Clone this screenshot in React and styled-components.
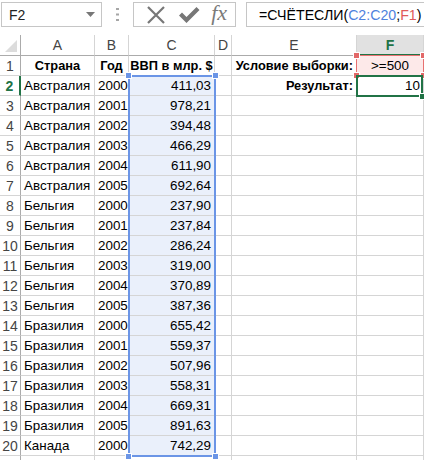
import React from "react";
import styled, { createGlobalStyle, css } from "styled-components";

const GlobalStyle = createGlobalStyle`
  html, body {
    margin: 0;
    padding: 0;
    background: #fff;
    overflow: hidden;
  }
  body {
    font-family: "Liberation Sans", Arial, sans-serif;
    font-size: 14px;
    color: #000;
  }
`;

const COLS = [21, 74, 34, 86, 17, 125];
const ROW_H = 20;
const HEAD_H = 21;

const Toolbar = styled.div`
  display: flex;
  align-items: stretch;
  height: 25px;
  padding: 2px 0 8px 1px;
`;

const NameBox = styled.div`
  width: 101px;
  box-sizing: border-box;
  border: 1px solid #c6c6c6;
  display: flex;
  align-items: center;
  justify-content: space-between;
  padding: 0 6px 0 7px;
  font-size: 14px;
  color: #222;
`;

const Grip = styled.div`
  width: 31px;
  display: flex;
  align-items: center;
  justify-content: center;
`;

const ButtonBox = styled.div`
  width: 103px;
  box-sizing: border-box;
  border: 1px solid #c6c6c6;
  display: flex;
  align-items: center;
  justify-content: space-around;
  padding: 0 2px 0 6px;
`;

const Fx = styled.span`
  font-family: "Liberation Serif", "Times New Roman", serif;
  font-style: italic;
  font-size: 22px;
  color: #7a7a7a;
  line-height: 1;
  margin-top: -3px;
`;

const FormulaBox = styled.div`
  flex: 1;
  margin-left: 10px;
  box-sizing: border-box;
  border: 1px solid #c6c6c6;
  border-right: none;
  display: flex;
  align-items: center;
  padding-left: 12px;
  font-size: 14.2px;
  white-space: nowrap;
`;

const Ref = styled.span`
  color: ${(p) => p.$color};
`;

const Sheet = styled.div`
  position: relative;
  display: grid;
  grid-template-columns: ${COLS.map((c) => c + "px").join(" ")} 1fr;
  grid-auto-rows: ${ROW_H}px;
  grid-template-rows: ${HEAD_H}px;
`;

const HeadCell = styled.div`
  box-sizing: border-box;
  display: flex;
  align-items: center;
  justify-content: center;
  background: #fff;
  color: #444;
  font-size: 14px;
  border-right: 1px solid #d5d5d5;
  border-bottom: 1px solid #ababab;
  ${(p) =>
    p.$active &&
    css`
      background: #e1e1e1;
      color: #217346;
      font-weight: bold;
      border-bottom: 2px solid #217346;
    `}
`;

const Corner = styled(HeadCell)`
  align-items: flex-end;
  justify-content: flex-end;
  padding: 0 3px 3px 0;
  border-right: 1px solid #ababab;
`;

const RowHead = styled.div`
  box-sizing: border-box;
  display: flex;
  align-items: center;
  justify-content: center;
  color: #444;
  font-size: 14px;
  border-right: 1px solid #ababab;
  border-bottom: 1px solid #d5d5d5;
  ${(p) =>
    p.$active &&
    css`
      color: #217346;
      font-weight: bold;
      border-right: 2px solid #217346;
    `}
`;

const Cell = styled.div`
  box-sizing: border-box;
  display: flex;
  align-items: center;
  justify-content: ${(p) =>
    p.$align === "right" ? "flex-end" : p.$align === "center" ? "center" : "flex-start"};
  padding: 0 3px 0 3px;
  white-space: nowrap;
  overflow: visible;
  font-size: ${(p) => (p.$bold ? "12.8px" : "13.4px")};
  font-weight: ${(p) => (p.$bold ? "bold" : "normal")};
  background: ${(p) => p.$fill || "#fff"};
  border-right: 1px solid #d5d5d5;
  border-bottom: 1px solid #d5d5d5;
`;

const Range = styled.div`
  position: absolute;
  box-sizing: border-box;
  pointer-events: none;
  border: ${(p) => p.$w}px solid ${(p) => p.$color};
`;

const Handle = styled.div`
  position: absolute;
  width: 5px;
  height: 5px;
  background: ${(p) => p.$color};
  border: 1px solid #fff;
`;

const data = [
  ["Австралия", 2000, "411,03"],
  ["Австралия", 2001, "978,21"],
  ["Австралия", 2002, "394,48"],
  ["Австралия", 2003, "466,29"],
  ["Австралия", 2004, "611,90"],
  ["Австралия", 2005, "692,64"],
  ["Бельгия", 2000, "237,90"],
  ["Бельгия", 2001, "237,84"],
  ["Бельгия", 2002, "286,24"],
  ["Бельгия", 2003, "319,00"],
  ["Бельгия", 2004, "370,89"],
  ["Бельгия", 2005, "387,36"],
  ["Бразилия", 2000, "655,42"],
  ["Бразилия", 2001, "559,37"],
  ["Бразилия", 2002, "507,96"],
  ["Бразилия", 2003, "558,31"],
  ["Бразилия", 2004, "669,31"],
  ["Бразилия", 2005, "891,63"],
  ["Канада", 2000, "742,29"],
];

const colLeft = (i) => COLS.slice(0, i).reduce((a, b) => a + b, 0);
const rowTop = (r) => HEAD_H + (r - 1) * ROW_H;

function Corners({ left, top, width, height, color }) {
  const pts = [
    [left - 3, top - 3],
    [left + width - 4, top - 3],
    [left - 3, top + height - 4],
    [left + width - 4, top + height - 4],
  ];
  return pts.map(([x, y], i) => (
    <Handle key={i} $color={color} style={{ left: x, top: y }} />
  ));
}

export default function App() {
  const rows = [
    { n: 1, a: "Страна", b: "Год", c: "ВВП в млр. $", e: "Условие выборки:", f: ">=500", head: true },
    ...data.map(([a, b, c], i) => ({
      n: i + 2,
      a,
      b,
      c,
      e: i === 0 ? "Результат:" : "",
      f: i === 0 ? "10" : "",
    })),
    { n: 21, label: "", a: "", b: "", c: "", e: "", f: "" },
  ];

  const cL = colLeft(3);
  const fL = colLeft(6);

  return (
    <>
      <GlobalStyle />
      <Toolbar>
        <NameBox>
          <span>F2</span>
          <svg width="9" height="5" viewBox="0 0 9 5">
            <polygon points="0,0 9,0 4.5,5" fill="#777" />
          </svg>
        </NameBox>
        <Grip>
          <svg width="3" height="13" viewBox="0 0 3 13">
            <rect x="0" y="0" width="3" height="2" fill="#a6a6a6" />
            <rect x="0" y="5.5" width="3" height="2" fill="#a6a6a6" />
            <rect x="0" y="11" width="3" height="2" fill="#a6a6a6" />
          </svg>
        </Grip>
        <ButtonBox>
          <svg width="20" height="18" viewBox="0 0 20 18">
            <path d="M2 1 L18 17 M18 1 L2 17" stroke="#777" strokeWidth="2.2" fill="none" />
          </svg>
          <svg width="22" height="18" viewBox="0 0 22 18">
            <path d="M1 9.5 L4 6.5 L8.5 11 L18.5 1 L21.5 4 L8.5 17 Z" fill="#777" />
          </svg>
          <Fx>fx</Fx>
        </ButtonBox>
        <FormulaBox>
          =СЧЁТЕСЛИ(<Ref $color="#4f82dd">C2:C20</Ref>;<Ref $color="#e05a5a">F1</Ref>)
        </FormulaBox>
      </Toolbar>

      <Sheet>
        <Corner>
          <svg width="12" height="12" viewBox="0 0 12 12">
            <polygon points="12,0 12,12 0,12" fill="#dcdcdc" />
          </svg>
        </Corner>
        {["A", "B", "C", "D", "E", "F"].map((l) => (
          <HeadCell key={l} $active={l === "F"}>
            {l}
          </HeadCell>
        ))}

        {rows.map((r) => {
          const inSel = r.n >= 2 && r.n <= 20;
          return (
            <React.Fragment key={r.n}>
              <RowHead $active={r.n === 2}>{r.label ?? r.n}</RowHead>
              <Cell $bold={r.head} $align={r.head ? "center" : "left"}>{r.a}</Cell>
              <Cell $bold={r.head} $align={r.head ? "center" : "left"}>{r.b}</Cell>
              <Cell
                $bold={r.head}
                $align={r.head ? "center" : "right"}
                $fill={inSel ? "#eaf0fb" : undefined}
              >
                {r.c}
              </Cell>
              <Cell />
              <Cell $bold $align="right">{r.e}</Cell>
              <Cell
                $align={r.n === 1 ? "center" : "right"}
                $fill={r.n === 1 ? "#fde9e9" : undefined}
              >
                {r.f}
              </Cell>
            </React.Fragment>
          );
        })}

        <Range
          $w={2}
          $color="#6b95e6"
          style={{ left: cL - 1, top: rowTop(2) - 1, width: COLS[3] + 2, height: ROW_H * 19 + 2 }}
        />
        <Corners
          left={cL - 1}
          top={rowTop(2) - 1}
          width={COLS[3] + 2}
          height={ROW_H * 19 + 2}
          color="#6b95e6"
        />

        <Range
          $w={1}
          $color="#e77171"
          style={{ left: fL - 1, top: rowTop(1) - 1, width: 68, height: ROW_H + 1 }}
        />
        <Corners left={fL - 1} top={rowTop(1) - 1} width={68} height={ROW_H + 1} color="#e26868" />

        <Range
          $w={2}
          $color="#217346"
          style={{ left: fL - 1, top: rowTop(2) - 1, width: 67, height: ROW_H + 2 }}
        />
        <Handle $color="#217346" style={{ left: fL + 62, top: rowTop(3) - 3 }} />
      </Sheet>
    </>
  );
}
